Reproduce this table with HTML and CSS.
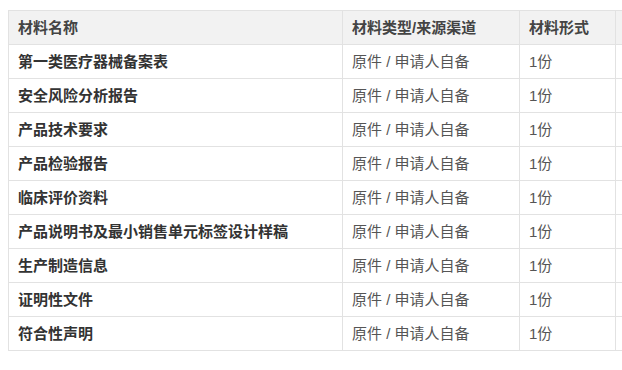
FILE: index.html
```html
<!DOCTYPE html>
<html lang="zh">
<head>
<meta charset="utf-8">
<link rel="stylesheet" href="styles.css">
</head>
<body>
<div class="wrap">
<table class="mat-table">
  <colgroup>
    <col class="c1"><col class="c2"><col class="c3"><col class="c4">
  </colgroup>
  <thead>
    <tr><th>材料名称</th><th>材料类型/来源渠道</th><th>材料形式</th><th></th></tr>
  </thead>
  <tbody>
    <tr><td class="name">第一类医疗器械备案表</td><td>原件 / 申请人自备</td><td>1份</td><td></td></tr>
    <tr><td class="name">安全风险分析报告</td><td>原件 / 申请人自备</td><td>1份</td><td></td></tr>
    <tr><td class="name">产品技术要求</td><td>原件 / 申请人自备</td><td>1份</td><td></td></tr>
    <tr><td class="name">产品检验报告</td><td>原件 / 申请人自备</td><td>1份</td><td></td></tr>
    <tr><td class="name">临床评价资料</td><td>原件 / 申请人自备</td><td>1份</td><td></td></tr>
    <tr><td class="name">产品说明书及最小销售单元标签设计样稿</td><td>原件 / 申请人自备</td><td>1份</td><td></td></tr>
    <tr><td class="name">生产制造信息</td><td>原件 / 申请人自备</td><td>1份</td><td></td></tr>
    <tr><td class="name">证明性文件</td><td>原件 / 申请人自备</td><td>1份</td><td></td></tr>
    <tr><td class="name">符合性声明</td><td>原件 / 申请人自备</td><td>1份</td><td></td></tr>
  </tbody>
</table>
</div>
</body>
</html>
```
FILE: styles.css
```css
html, body {
  margin: 0;
  padding: 0;
  background: #fff;
  overflow: hidden;
}
.wrap {
  padding: 10px 0 0 8px;
  width: 720px;
}
.mat-table {
  border-collapse: collapse;
  table-layout: fixed;
  width: 700px;
  font-family: "Liberation Sans", "Noto Sans CJK SC", sans-serif;
  font-size: 15px;
  color: #555;
}
.c1 { width: 334px; }
.c2 { width: 177px; }
.c3 { width: 96px; }
.c4 { width: 93px; }
.mat-table th,
.mat-table td {
  border: 1px solid #e2e2e2;
  padding: 6px 9px;
  line-height: 21px;
  height: 21px;
  text-align: left;
  white-space: nowrap;
  overflow: hidden;
}
.mat-table th {
  background: #f2f2f2;
  font-weight: bold;
  color: #444;
}
.mat-table td.name {
  font-weight: bold;
  color: #333;
}
```
